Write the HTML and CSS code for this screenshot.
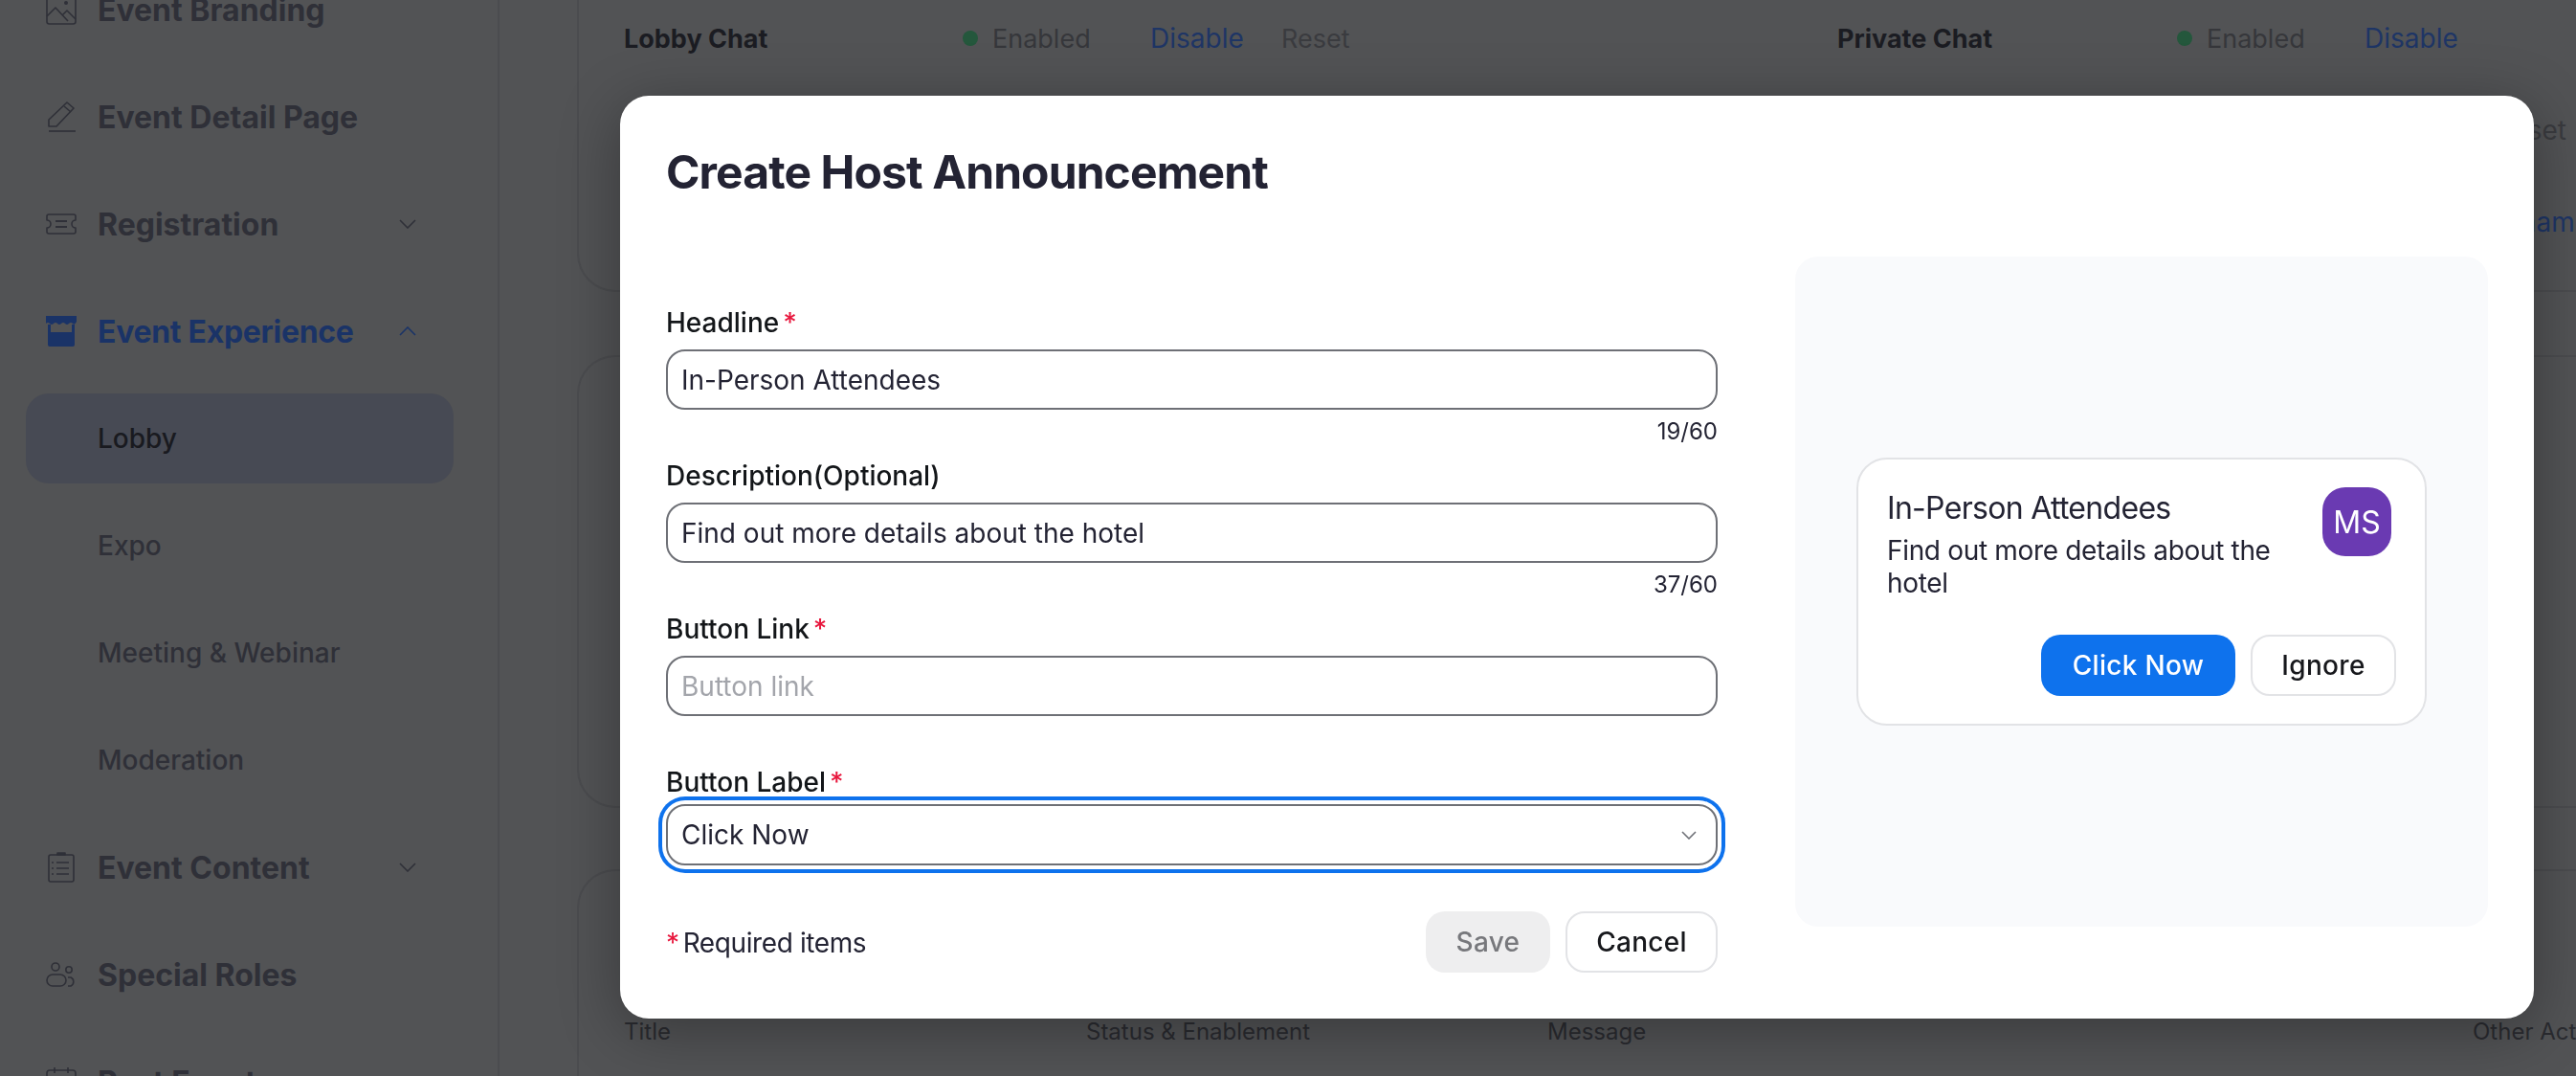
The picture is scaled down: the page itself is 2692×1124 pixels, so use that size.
FILE: index.html
```html
<!DOCTYPE html>
<html lang="en">
<head>
<meta charset="utf-8">
<title>Create Host Announcement</title>
<link rel="stylesheet" href="styles.css">
</head>
<body>
<div class="page">
  <nav class="sidebar">
    <div class="nav-item bold">
      <svg class="nav-icon" viewBox="0 0 32 32" fill="none" stroke="currentColor" stroke-width="1.6" stroke-linejoin="round"><rect x="1" y="1" width="30" height="30" rx="2.5"/><path d="M1 23l9-9 13 14M17 22l5-5 9 9"/><circle cx="21" cy="9" r="2" fill="currentColor" stroke="none"/></svg>
      <span>Event Branding</span>
    </div>
    <div class="nav-item bold">
      <svg class="nav-icon" viewBox="0 0 32 32" fill="none" stroke="currentColor" stroke-width="1.6" stroke-linejoin="round"><path d="M22 1l7 6L11 26H3v-7z"/><path d="M19 5l7 6"/><path d="M3 31h28"/></svg>
      <span>Event Detail Page</span>
    </div>
    <div class="nav-item bold">
      <svg class="nav-icon" viewBox="0 0 32 32" fill="none" stroke="currentColor" stroke-width="1.6" stroke-linejoin="round"><path d="M3 6h26a2 2 0 0 1 2 2v4a4 4 0 0 0 0 8v4a2 2 0 0 1-2 2H3a2 2 0 0 1-2-2v-4a4 4 0 0 0 0-8V8a2 2 0 0 1 2-2z" /><path d="M10 13h12M10 19h12" stroke-width="2"/></svg>
      <span>Registration</span>
      <svg class="nav-chevron" viewBox="0 0 18 10" fill="none" stroke="currentColor" stroke-width="1.6"><path d="M1 1l8 8 8-8"/></svg>
    </div>
    <div class="nav-item bold active">
      <svg class="nav-icon" viewBox="0 0 32 32" fill="currentColor"><path d="M0 0h32v6q-2 4-4 2t-4 0-4 0-4 0-4 0-4 0-4 0-4 0-4-2z"/><path d="M2 9h3v8h22V9h3v21a2 2 0 0 1-2 2H4a2 2 0 0 1-2-2z"/></svg>
      <span>Event Experience</span>
      <svg class="nav-chevron" viewBox="0 0 18 10" fill="none" stroke="currentColor" stroke-width="1.6"><path d="M1 9l8-8 8 8"/></svg>
    </div>
    <div class="nav-item sub current"><span>Lobby</span></div>
    <div class="nav-item sub"><span>Expo</span></div>
    <div class="nav-item sub"><span>Meeting &amp; Webinar</span></div>
    <div class="nav-item sub"><span>Moderation</span></div>
    <div class="nav-item bold">
      <svg class="nav-icon" viewBox="0 0 32 32" fill="none" stroke="currentColor" stroke-width="1.6" stroke-linejoin="round"><rect x="3" y="3" width="26" height="28" rx="2"/><path d="M12 3V1h8v2z" fill="currentColor"/><path d="M11 11h13M11 17h13M11 23h13M6 11h2M6 17h2M6 23h2"/></svg>
      <span>Event Content</span>
      <svg class="nav-chevron" viewBox="0 0 18 10" fill="none" stroke="currentColor" stroke-width="1.6"><path d="M1 1l8 8 8-8"/></svg>
    </div>
    <div class="nav-item bold">
      <svg class="nav-icon" viewBox="0 0 32 32" fill="none" stroke="currentColor" stroke-width="1.6"><circle cx="10" cy="8" r="4"/><circle cx="24" cy="11" r="3.2"/><path d="M7 28h8a6 6 0 0 0 0-12H7a6 6 0 0 0 0 12z"/><path d="M23 19h3a5 5 0 0 1 0 9h-3"/></svg>
      <span>Special Roles</span>
    </div>
    <div class="nav-item bold">
      <svg class="nav-icon" viewBox="0 0 32 32" fill="none" stroke="currentColor" stroke-width="1.6"><rect x="1" y="4" width="30" height="27" rx="3"/><path d="M9 1v6M23 1v6M1 12h30"/></svg>
      <span>Post Event</span>
    </div>
  </nav>

  <main class="content">
    <section class="bg-card bg-card-first">
      <div class="chat-row">
        <div class="chat-col">
          <span class="chat-name">Lobby Chat</span>
          <span class="dot"></span><span class="chat-status">Enabled</span>
          <span class="chat-link">Disable</span><span class="chat-reset">Reset</span>
        </div>
        <div class="chat-col chat-col-right">
          <span class="chat-name">Private Chat</span>
          <span class="dot"></span><span class="chat-status">Enabled</span>
          <span class="chat-link">Disable</span>
        </div>
      </div>
      <div class="edge-text edge-first">Reset</div>
      <div class="edge-text edge-link">Rename</div>
    </section>
    <section class="bg-card bg-card-middle"></section>
    <section class="bg-card bg-card-last">
      <div class="table-head">
        <span>Title</span><span>Status &amp; Enablement</span><span>Message</span><span>Other Actions</span>
      </div>
    </section>
  </main>
</div>

<div class="overlay">
  <div class="modal" role="dialog">
    <h1 class="modal-title">Create Host Announcement</h1>
    <div class="modal-body">
      <form class="form">
        <div class="label">Headline<span class="req">*</span></div>
        <div class="field">In-Person Attendees</div>
        <div class="counter">19/60</div>
        <div class="label">Description(Optional)</div>
        <div class="field">Find out more details about the hotel</div>
        <div class="counter">37/60</div>
        <div class="label">Button Link<span class="req">*</span></div>
        <div class="field placeholder">Button link</div>
        <div class="counter empty"></div>
        <div class="label label-tight">Button Label<span class="req">*</span></div>
        <div class="field select">
          <span>Click Now</span>
          <svg class="select-chevron" viewBox="0 0 16 9" fill="none" stroke="currentColor" stroke-width="1.6"><path d="M1 1l7 7 7-7"/></svg>
        </div>
        <div class="form-footer">
          <div class="required-note"><span class="req req-lead">*</span>Required items</div>
          <div class="btn-group">
            <div class="btn btn-disabled">Save</div>
            <div class="btn btn-outline btn-cancel">Cancel</div>
          </div>
        </div>
      </form>
      <aside class="preview">
        <div class="notice">
          <div class="notice-top">
            <div class="notice-text">
              <div class="notice-title">In-Person Attendees</div>
              <div class="notice-desc">Find out more details about the hotel</div>
            </div>
            <div class="avatar">MS</div>
          </div>
          <div class="notice-actions">
            <div class="btn btn-primary">Click Now</div>
            <div class="btn btn-outline btn-ignore">Ignore</div>
          </div>
        </div>
      </aside>
    </div>
  </div>
</div>
</body>
</html>
```

FILE: styles.css
```css
* { box-sizing: border-box; }
html, body { margin: 0; height: 100%; overflow: hidden; }
body { background: #525355; font-family: Inter, "Noto Sans", sans-serif; color: #232333; }

.page { display: flex; width: 2692px; height: 1124px; overflow: hidden; }

/* sidebar */
.sidebar { width: 522px; flex: none; border-right: 2px solid #4b4c4f; padding: 0 46px 0 27px; margin-top: -46px; }
.nav-item { height: 112px; display: flex; align-items: center; padding-left: 21px; color: #2f3038; }
.nav-item.bold { font-size: 32px; font-weight: 700; }
.nav-item.sub { font-size: 28px; font-weight: 500; padding-left: 75px; }
.nav-item.current { height: 94px; margin: 9px 0; background: #474a54; border-radius: 24px; color: #191a20; }
.nav-item.bold.active { color: #1a3367; letter-spacing: -0.3px; }
.nav-icon { width: 32px; height: 32px; flex: none; margin-right: 22px; }
.nav-chevron { width: 18px; height: 10px; margin-left: auto; margin-right: 39px; flex: none; }

/* dimmed page behind the dialog */
.content { flex: 1; padding-left: 81px; min-width: 0; }
.bg-card { border: 2px solid #4b4c4f; border-right: 0; border-radius: 40px 0 0 40px; }
.bg-card-first { height: 345px; margin-top: -40px; border-top: 0; padding-top: 62px; border-top-left-radius: 0; }
.bg-card-middle { height: 473px; margin-top: 66px; }
.bg-card-last { height: 300px; margin-top: 64px; padding-top: 152px; }

.chat-row { display: flex; height: 36px; align-items: center; font-size: 27px; }
.chat-col { display: flex; align-items: center; padding-left: 47px; width: 1315px; flex: none; }
.chat-col-right { padding-left: 0; }
.chat-name { font-weight: 700; letter-spacing: 0; color: #1b1c22; width: 354px; flex: none; }
.chat-col-right .chat-name { width: 355px; }
.dot { width: 16px; height: 16px; border-radius: 50%; background: #24573c; margin-right: 15px; flex: none; }
.chat-status { color: #36373b; width: 165px; flex: none; }
.chat-link { color: #1e3565; width: 137px; flex: none; font-size: 28px; }
.chat-reset { color: #3a3b3f; }

.edge-text { font-size: 28px; line-height: 36px; text-align: right; padding-right: 10px; }
.edge-first { color: #3a3b3f; margin-top: 60px; }
.edge-link { color: #1e3565; margin-top: 60px; margin-right: -25px; }

.table-head { display: grid; grid-template-columns: 483px 482px 967px 1fr; padding-left: 47px; font-size: 24px; line-height: 32px; color: #2a2b30; white-space: nowrap; }

/* dialog */
.overlay { position: fixed; inset: 0; padding: 100px 0 0 648px; }
.modal { width: 2000px; height: 964px; background: #fff; border-radius: 30px; padding: 48px 48px; box-shadow: 0 12px 64px rgba(0,0,0,.32); }
.modal-title { margin: 0; font-size: 48px; line-height: 64px; font-weight: 700; color: #232333; letter-spacing: -0.9px; }
.modal-body { display: flex; justify-content: space-between; margin-top: 56px; }

.form { width: 1099px; flex: none; padding-top: 49px; }
.label { font-size: 28px; font-weight: 500; line-height: 40px; height: 40px; margin-bottom: 8px; color: #131619; }
.label-tight { margin-bottom: 3px; }
.req { color: #e8173d; margin-left: 4px; }
.req-lead { margin: 0 4px 0 0; }
.field { height: 63px; border: 2px solid #6e7076; border-radius: 20px; padding: 0 14px; display: flex; align-items: center; font-size: 28px; color: #232333; background: #fff; }
.placeholder { color: #a3a5ab; }
.select { justify-content: space-between; padding-right: 20px; box-shadow: 0 0 0 4px #fff, 0 0 0 8px #0e72ed; height: 64px; }
.select-chevron { width: 16px; height: 9px; color: #6e7076; }
.counter { height: 49px; padding-top: 7px; text-align: right; font-size: 24px; line-height: 32px; color: #232333; }

.form-footer { display: flex; align-items: center; justify-content: space-between; margin-top: 48px; }
.required-note { font-size: 28px; letter-spacing: -0.4px; padding-top: 2px; color: #232333; }
.btn-group { display: flex; gap: 16px; }
.btn { height: 64px; border-radius: 20px; display: flex; align-items: center; justify-content: center; font-size: 28px; font-weight: 500; letter-spacing: 0.3px; }
.btn-disabled { width: 130px; background: #eeeeef; color: #77787c; }
.btn-outline { background: #fff; border: 2px solid #e2e3e6; color: #17181c; }
.btn-cancel { width: 159px; }
.btn-primary { width: 203px; background: #0e72ed; color: #fff; }
.btn-ignore { width: 152px; }

/* preview */
.preview { width: 724px; height: 700px; flex: none; background: #f9fafc; border-radius: 24px; padding: 210px 64px 0; }
.notice { width: 596px; height: 280px; background: #fff; border: 2px solid #e2e3e6; border-radius: 32px; padding: 29px 30px 0; }
.notice-top { display: flex; justify-content: space-between; height: 154px; }
.notice-text { width: 420px; padding-top: 2px; }
.notice-title { font-size: 32px; line-height: 40px; letter-spacing: -0.7px; color: #232333; }
.notice-desc { font-size: 28px; line-height: 34px; margin-top: 7px; letter-spacing: -0.33px; color: #232333; }
.avatar { width: 72px; height: 72px; background: #6a3ab2; border-radius: 24px; color: #fff; font-size: 32px; display: flex; align-items: center; justify-content: center; margin-right: 5px; }
.notice-actions { display: flex; gap: 16px; justify-content: flex-end; }
```
